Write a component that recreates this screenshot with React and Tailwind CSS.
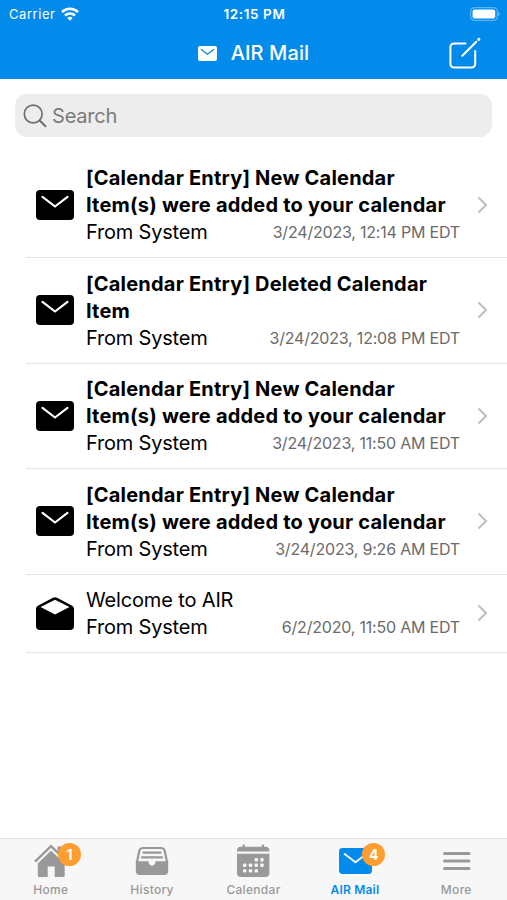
import { clsx } from 'clsx';

const messages = [
    {
        id: 1,
        lines: ['[Calendar Entry] New Calendar', 'Item(s) were added to your calendar'],
        from: 'From System',
        date: '3/24/2023, 12:14 PM EDT',
        unread: true
    },
    {
        id: 2,
        lines: ['[Calendar Entry] Deleted Calendar', 'Item'],
        from: 'From System',
        date: '3/24/2023, 12:08 PM EDT',
        unread: true
    },
    {
        id: 3,
        lines: ['[Calendar Entry] New Calendar', 'Item(s) were added to your calendar'],
        from: 'From System',
        date: '3/24/2023, 11:50 AM EDT',
        unread: true
    },
    {
        id: 4,
        lines: ['[Calendar Entry] New Calendar', 'Item(s) were added to your calendar'],
        from: 'From System',
        date: '3/24/2023, 9:26 AM EDT',
        unread: true
    },
    {
        id: 5,
        lines: ['Welcome to AIR'],
        from: 'From System',
        date: '6/2/2020, 11:50 AM EDT',
        unread: false
    }
];

function WifiIcon() {
    return (
        <svg width="18" height="14" viewBox="0 0 18 14" fill="none" stroke="#fff" strokeWidth="2.5">
            <path d="M1 5.1a11.4 11.4 0 0 1 16 0" />
            <path d="M4 8.5a7.2 7.2 0 0 1 10 0" />
            <path d="M9 13.8 6.3 11a3.8 3.8 0 0 1 5.4 0Z" fill="#fff" stroke="none" />
        </svg>
    );
}

function BatteryIcon() {
    return (
        <svg width="30" height="14" viewBox="0 0 30 14" fill="none">
            <rect x="0.6" y="0.6" width="26.8" height="12.8" rx="4" stroke="#fff" strokeOpacity="0.35" strokeWidth="1.2" />
            <rect x="2.6" y="2.5" width="22.6" height="9" rx="2" fill="#fff" />
            <path d="M28.3 4.8c1.7.6 1.7 3.8 0 4.4Z" fill="#fff" fillOpacity="0.45" />
        </svg>
    );
}

function ComposeIcon() {
    return (
        <svg width="34" height="34" viewBox="0 0 34 34" fill="none" stroke="#fff" strokeWidth="2" strokeLinecap="round">
            <path d="M18.500 7.500H7a3.600 3.600 0 0 0-3.600 3.600V28A3.600 3.600 0 0 0 7 31.600h17.600a3.600 3.600 0 0 0 3.600-3.600V15" strokeLinejoin="round" />
            <path d="M15.300 19.800 29.300 5.800" />
            <path d="M31.700 3.500l.3-.3" strokeWidth="2.800" />
        </svg>
    );
}

function MailIcon({ className, flap = '#fff', strokeWidth = 2.2 }) {
    return (
        <svg className={className} viewBox="0 0 38 30">
            <rect width="38" height="30" rx="4" fill="currentColor" />
            <path d="M6.500 6.800 19 16.500 31.500 6.800" fill="none" stroke={flap} strokeWidth={strokeWidth} strokeLinecap="round" strokeLinejoin="round" />
        </svg>
    );
}

function MailOpenIcon() {
    return (
        <svg className="h-[33px] w-[38px]" viewBox="0 0 38 33">
            <path d="M16.900.7 1.900 8.800C.6 9.600 0 10.700 0 12.200V29a4 4 0 0 0 4 4h30a4 4 0 0 0 4-4V12.200c0-1.500-.6-2.600-1.900-3.400L21.100.7a4.400 4.400 0 0 0-4.200 0Z" fill="#000" />
            <path d="M19 2.700 33.500 10 19 17.600 4.500 10Z" fill="#fff" />
        </svg>
    );
}

function HomeIcon() {
    return (
        <svg width="34" height="34" viewBox="0 0 34 34" fill="none">
            <path d="M1 17.600 17 2.200 33 17.600" stroke="#999" strokeWidth="2.400" />
            <path d="M23.500 2.500h3.500v9l-3.500-3.300Z" fill="#999" />
            <path d="M17 6.600 30.700 19.600V31.500a1.500 1.500 0 0 1-1.500 1.500H20.700V22.500h-7V33H5.300a1.500 1.500 0 0 1-1.500-1.500V19.600Z" fill="#999" />
        </svg>
    );
}

function HistoryIcon() {
    return (
        <svg width="34" height="34" viewBox="0 0 34 34" fill="none">
            <path d="M1.900 18.500 4.300 6.800A3.600 3.600 0 0 1 7.900 4h18.200a3.600 3.600 0 0 1 3.600 2.800L32.100 18.500" stroke="#999" strokeWidth="2.200" />
            <path d="M8.500 8.700h17M7 13.400h20" stroke="#999" strokeWidth="2.200" strokeLinecap="round" />
            <path d="M.8 17.300h12.100c.4 0 .7.300.7.700a3.400 3.400 0 0 0 6.800 0c0-.4.300-.7.700-.7h12.100V27a4 4 0 0 1-4 4H4.800a4 4 0 0 1-4-4Z" fill="#999" />
        </svg>
    );
}

function CalendarIcon() {
    const dots = [
        [20.3, 15.7], [26, 15.7],
        [8.7, 21.3], [14.5, 21.3], [20.3, 21.3], [26, 21.3],
        [8.7, 26.9], [14.5, 26.9], [20.3, 26.9]
    ];
    return (
        <svg width="34" height="34" viewBox="0 0 34 34">
            <path d="M1 7.600V6.800a4 4 0 0 1 4-4h1.500V1.700a1.200 1.200 0 0 1 2.400 0v1.100h16.800V1.700a1.200 1.200 0 0 1 2.400 0v1.100h1.300a4 4 0 0 1 4 4v.8Z" fill="#999" />
            <path d="M1 9.800h32.400v19.200a4 4 0 0 1-4 4H5a4 4 0 0 1-4-4Z" fill="#999" />
            {dots.map(([x, y]) => (
                <rect key={`${x}-${y}`} x={x - 1.7} y={y - 1.7} width="3.4" height="3.4" rx="1" fill="#f7f7f7" />
            ))}
        </svg>
    );
}

function MenuIcon() {
    return (
        <svg width="34" height="34" viewBox="0 0 34 34" stroke="#999" strokeWidth="3" strokeLinecap="round">
            <path d="M5.500 9.500h24.500M5.500 17h24.500M5.500 24.500h24.500" />
        </svg>
    );
}

const tabs = [
    { label: 'Home', icon: <HomeIcon />, badge: 1 },
    { label: 'History', icon: <HistoryIcon /> },
    { label: 'Calendar', icon: <CalendarIcon /> },
    { label: 'AIR Mail', icon: <MailIcon className="ml-px mt-1 h-[26px] w-[33px]" flap="#f7f7f7" />, badge: 4, active: true },
    { label: 'More', icon: <MenuIcon /> }
];

function Header() {
    return (
        <header className="h-[79px] shrink-0 bg-[#038bec] text-white">
            <div className="grid h-7 grid-cols-3 items-center pl-[9px] pr-[7px] text-[13px]">
                <div className="flex items-center gap-1.5">
                    <span className="pt-px tracking-[0.55px]">Carrier</span>
                    <WifiIcon />
                </div>
                <span className="text-center text-[13.5px] font-semibold tracking-[0.6px]">12:15 PM</span>
                <div className="flex justify-end">
                    <BatteryIcon />
                </div>
            </div>
            <div className="grid h-[50px] grid-cols-[1fr_auto_1fr] items-center">
                <span />
                <h1 className="flex items-center gap-[14px] text-[20px] font-medium tracking-[0.1px]">
                    <MailIcon className="h-[15px] w-[19px]" flap="#038bec" strokeWidth={2.6} />
                    AIR Mail
                </h1>
                <button className="mr-[26px] justify-self-end">
                    <ComposeIcon />
                </button>
            </div>
        </header>
    );
}

function SearchBar() {
    return (
        <div className="mx-[15px] mt-[15px] flex h-[43px] shrink-0 items-center rounded-[12px] bg-[#ededed] pl-2 text-[#7b7b7d]">
            <svg width="24" height="24" viewBox="0 0 24 24" fill="none" stroke="#6f6f72" strokeWidth="1.7" strokeLinecap="round">
                <circle cx="10.2" cy="10" r="8.9" />
                <path d="M16.700 16.500 22.500 22.300" strokeWidth="2" />
            </svg>
            <span className="ml-[5px] text-[20px] tracking-[-0.2px]">Search</span>
        </div>
    );
}

function MessageRow({ message }) {
    return (
        <li className="ml-[26px] flex items-center border-b border-[#e6e6e6] py-[11.75px]">
            <div className="ml-2.5 w-[50px] shrink-0">
                {message.unread ? <MailIcon className="h-[30px] w-[38px] text-black" /> : <MailOpenIcon />}
            </div>
            <div className="-mb-px w-[374px] pt-px text-[20px] leading-[27px] text-black">
                {message.lines.map((line) => (
                    <p
                        key={line}
                        className={clsx(
                            'whitespace-nowrap',
                            message.unread ? 'font-bold tracking-[0.21px]' : 'tracking-[-0.15px]'
                        )}
                    >
                        {line}
                    </p>
                ))}
                <div className="flex justify-between">
                    <span className="tracking-[-0.2px]">{message.from}</span>
                    <span className="text-[16px] tracking-[-0.2px] text-[#6b6b6b]">{message.date}</span>
                </div>
            </div>
            <svg className="ml-[17px]" width="11" height="18" viewBox="0 0 11 18" fill="none" stroke="#c0c0c3" strokeWidth="2.1">
                <path d="M1.500 1.500 9 9l-7.500 7.500" />
            </svg>
        </li>
    );
}

function TabBar() {
    return (
        <nav className="grid h-[62px] shrink-0 grid-cols-5 border-t border-[#e3e3e3] bg-[#f7f7f7]">
            {tabs.map((tab) => (
                <div
                    key={tab.label}
                    className={clsx(
                        'flex flex-col items-center pt-[5px] text-[12px] leading-[14px]',
                        tab.active ? 'font-semibold tracking-[0.2px] text-[#038bec]' : 'font-medium tracking-[0.3px] text-[#999]'
                    )}
                >
                    <div className="relative flex h-[39px] justify-center">
                        {tab.icon}
                        {tab.badge && (
                            <span className="absolute left-[24.5px] top-[-1px] flex h-[23px] w-[23px] items-center justify-center rounded-full bg-[#ff9d2e] text-[14px] font-bold text-white">
                                {tab.badge}
                            </span>
                        )}
                    </div>
                    <span>{tab.label}</span>
                </div>
            ))}
        </nav>
    );
}

export default function App() {
    return (
        <div className="flex h-screen flex-col overflow-hidden bg-white font-['Inter',sans-serif]">
            <Header />
            <SearchBar />
            <ul className="mt-[15.5px] flex-1">
                {messages.map((message) => (
                    <MessageRow key={message.id} message={message} />
                ))}
            </ul>
            <TabBar />
        </div>
    );
}
